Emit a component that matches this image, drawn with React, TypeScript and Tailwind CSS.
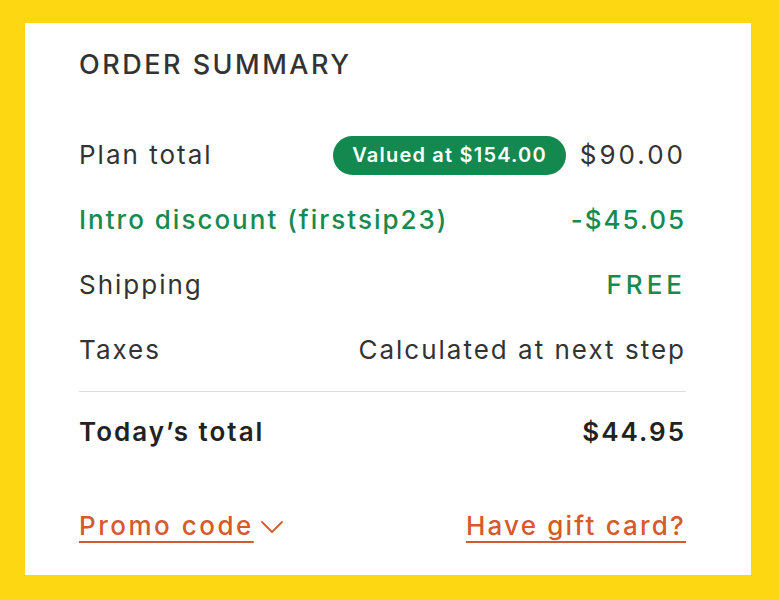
import React from "react";

const font = { fontFamily: "Inter, 'Noto Sans', sans-serif" };

function Row({ left, right, className = "" }: { left: React.ReactNode; right: React.ReactNode; className?: string }) {
  return (
    <div className={`flex h-[40px] items-center justify-between ${className}`}>
      <div>{left}</div>
      <div className="flex items-center">{right}</div>
    </div>
  );
}

export default function App() {
  return (
    <div className="h-[600px] w-[779px] bg-[#FDD712] pt-[23px] pl-[25px]" style={font}>
      <div className="flex h-[552px] w-[726px] flex-col bg-white pt-[22px] pr-[65px] pb-[29px] pl-[54px]">
        <h2 className="h-[40px] text-[27px] leading-[40px] font-medium tracking-[2.5px] text-[#333333]">
          ORDER SUMMARY
        </h2>
        <div className="mt-[50px] flex flex-col gap-[25px] text-[26px] leading-[40px] tracking-[2px] text-[#333333]">
          <Row
            left={<span>Plan total</span>}
            right={
              <>
                <span className="mr-[14px] flex h-[39px] items-center rounded-full bg-[#13884F] px-[19px] text-[20px] font-semibold tracking-[1.2px] text-white">
                  Valued at $154.00
                </span>
                <span className="tracking-[3px]">$90.00</span>
              </>
            }
          />
          <Row
            className="font-medium text-[#178A4F]"
            left={<span>Intro discount (firstsip23)</span>}
            right={<span>-$45.05</span>}
          />
          <Row left={<span>Shipping</span>} right={<span className="font-medium tracking-[4px] text-[#178A4F]">FREE</span>} />
          <Row left={<span>Taxes</span>} right={<span>Calculated at next step</span>} />
        </div>
        <div className="mt-[21px] h-px bg-[#DDDDDD]" />
        <div className="mt-[20px] text-[26px] leading-[40px] font-semibold tracking-[2px] text-[#222222]">
          <Row left={<span>Today’s total</span>} right={<span>$44.95</span>} />
        </div>
        <div className="mt-[54px] flex h-[40px] items-center justify-between text-[26px] leading-[40px] font-medium text-[#D65A2C]">
          <div className="flex items-center">
            <span className="tracking-[2.5px] underline decoration-[2px] underline-offset-[6px]">Promo code</span>
            <svg width="24" height="14" viewBox="0 0 24 14" className="ml-[6px] mt-[2px]" fill="none">
              <path d="M2 2 L12 12 L22 2" stroke="#D65A2C" strokeWidth="1.8" strokeLinecap="round" strokeLinejoin="round" />
            </svg>
          </div>
          <span className="tracking-[2.2px] underline decoration-[2px] underline-offset-[6px]">Have gift card?</span>
        </div>
      </div>
    </div>
  );
}
